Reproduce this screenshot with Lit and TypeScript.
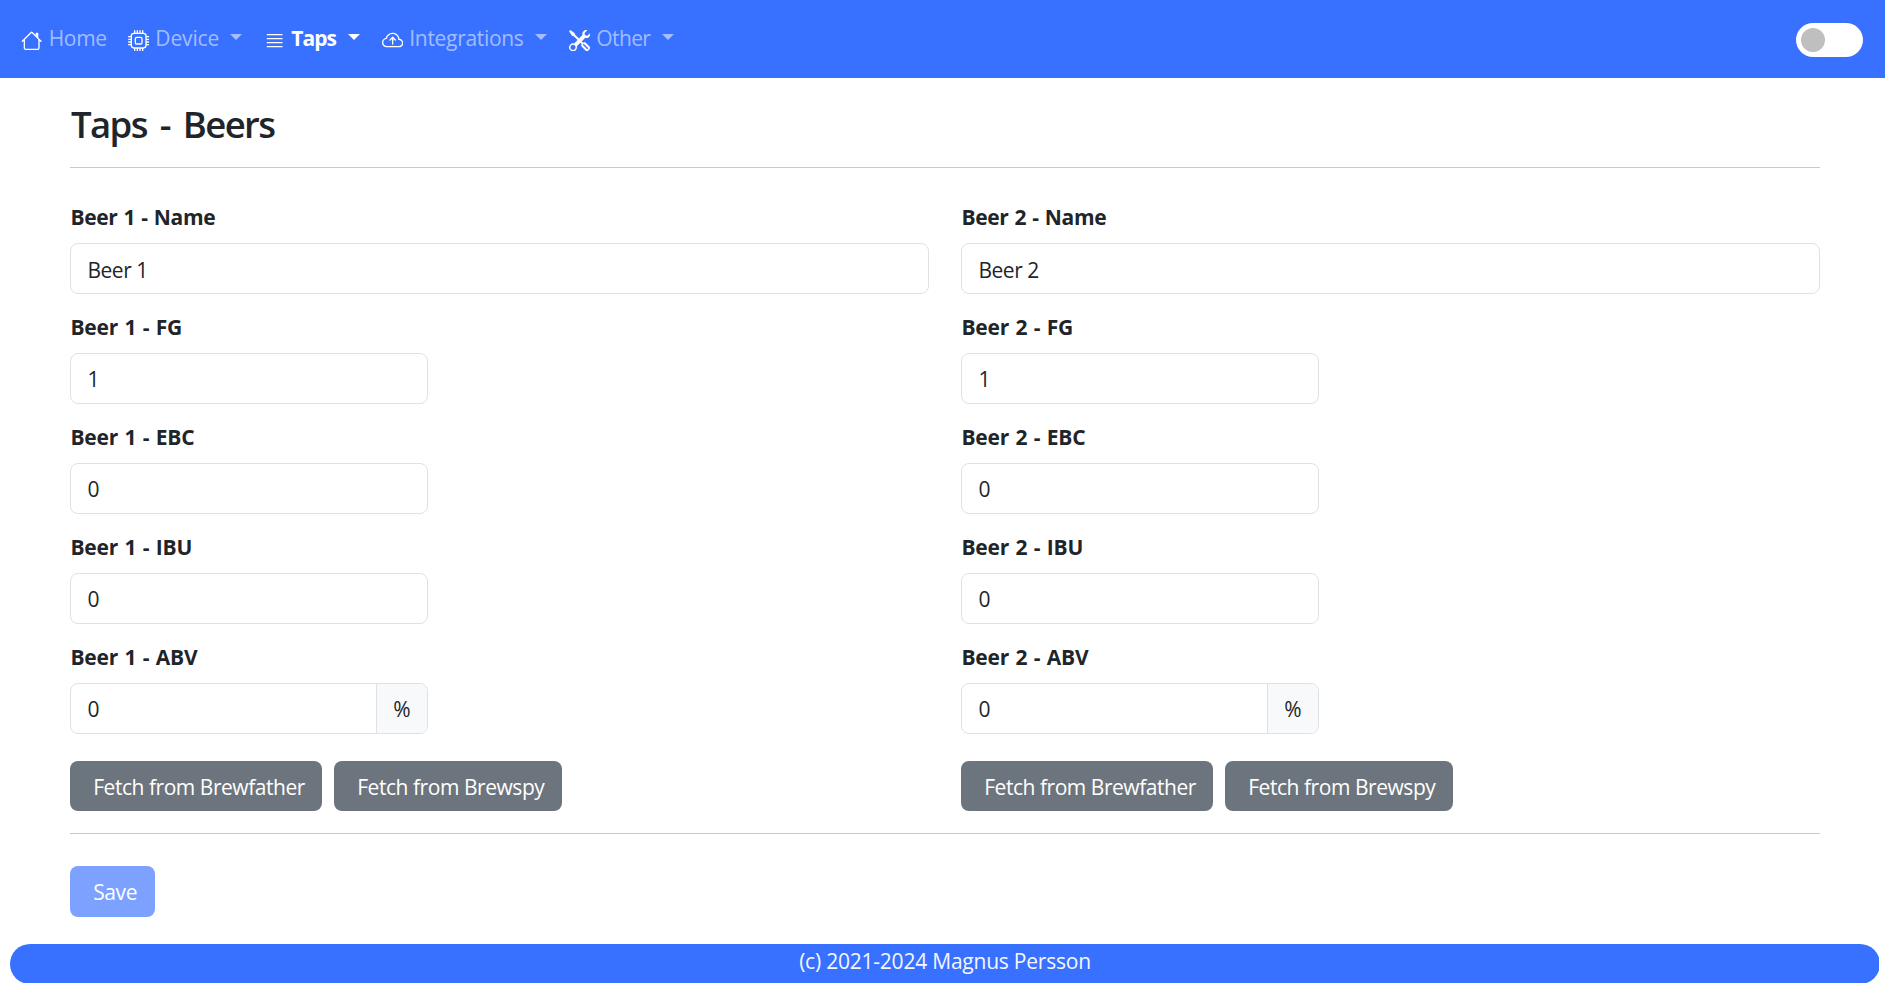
import { LitElement, html, css, svg } from "lit";
import { customElement, property } from "lit/decorators.js";

const ICONS: Record<string, string[]> = {
  house: [
    "M8.707 1.5a1 1 0 0 0-1.414 0L.646 8.146a.5.5 0 0 0 .708.708L2 8.207V13.5A1.5 1.5 0 0 0 3.5 15h9a1.5 1.5 0 0 0 1.5-1.5V8.207l.646.647a.5.5 0 0 0 .708-.708L13 5.793V2.5a.5.5 0 0 0-.5-.5h-1a.5.5 0 0 0-.5.5v1.293zM13 7.207V13.5a.5.5 0 0 1-.5.5h-9a.5.5 0 0 1-.5-.5V7.207l5-5z",
  ],
  cpu: [
    "M5 0a.5.5 0 0 1 .5.5V2h1V.5a.5.5 0 0 1 1 0V2h1V.5a.5.5 0 0 1 1 0V2h1V.5a.5.5 0 0 1 1 0V2A2.5 2.5 0 0 1 14 4.5h1.5a.5.5 0 0 1 0 1H14v1h1.5a.5.5 0 0 1 0 1H14v1h1.5a.5.5 0 0 1 0 1H14v1h1.5a.5.5 0 0 1 0 1H14a2.5 2.5 0 0 1-2.5 2.5v1.5a.5.5 0 0 1-1 0V14h-1v1.5a.5.5 0 0 1-1 0V14h-1v1.5a.5.5 0 0 1-1 0V14h-1v1.5a.5.5 0 0 1-1 0V14A2.5 2.5 0 0 1 2 11.5H.5a.5.5 0 0 1 0-1H2v-1H.5a.5.5 0 0 1 0-1H2v-1H.5a.5.5 0 0 1 0-1H2v-1H.5a.5.5 0 0 1 0-1H2A2.5 2.5 0 0 1 4.5 2V.5A.5.5 0 0 1 5 0m-.5 3A1.5 1.5 0 0 0 3 4.5v7A1.5 1.5 0 0 0 4.5 13h7a1.5 1.5 0 0 0 1.5-1.5v-7A1.5 1.5 0 0 0 11.5 3zM5 6.5A1.5 1.5 0 0 1 6.5 5h3A1.5 1.5 0 0 1 11 6.5v3A1.5 1.5 0 0 1 9.5 11h-3A1.5 1.5 0 0 1 5 9.5zM6.5 6a.5.5 0 0 0-.5.5v3a.5.5 0 0 0 .5.5h3a.5.5 0 0 0 .5-.5v-3a.5.5 0 0 0-.5-.5z",
  ],
  list: [
    "M2 12.5a.5.5 0 0 1 .5-.5h11a.5.5 0 0 1 0 1h-11a.5.5 0 0 1-.5-.5m0-3a.5.5 0 0 1 .5-.5h11a.5.5 0 0 1 0 1h-11a.5.5 0 0 1-.5-.5m0-3a.5.5 0 0 1 .5-.5h11a.5.5 0 0 1 0 1h-11a.5.5 0 0 1-.5-.5m0-3a.5.5 0 0 1 .5-.5h11a.5.5 0 0 1 0 1h-11a.5.5 0 0 1-.5-.5",
  ],
  cloud: [
    "M7.646 5.146a.5.5 0 0 1 .708 0l2 2a.5.5 0 0 1-.708.708L8.5 6.707V10.5a.5.5 0 0 1-1 0V6.707L6.354 7.854a.5.5 0 1 1-.708-.708z",
    "M4.406 3.342A5.53 5.53 0 0 1 8 2c2.69 0 4.923 2 5.166 4.579C14.758 6.804 16 8.137 16 9.773 16 11.569 14.502 13 12.687 13H3.781C1.708 13 0 11.366 0 9.318c0-1.763 1.266-3.223 2.942-3.593.143-.863.698-1.723 1.464-2.383m.653.757c-.757.653-1.153 1.44-1.153 2.056v.448l-.445.049C2.064 6.805 1 7.952 1 9.318 1 10.785 2.23 12 3.781 12h8.906C13.98 12 15 10.988 15 9.773c0-1.216-1.02-2.228-2.313-2.228h-.5v-.5C12.188 4.825 10.328 3 8 3a4.53 4.53 0 0 0-2.941 1.1z",
  ],
  tools: [
    "M1 0 0 1l2.2 3.081a1 1 0 0 0 .815.419h.07a1 1 0 0 1 .708.293l2.675 2.675-2.617 2.654A3.003 3.003 0 0 0 0 13a3 3 0 1 0 5.878-.851l2.654-2.617.968.968-.305.914a1 1 0 0 0 .242 1.023l3.27 3.27a.997.997 0 0 0 1.414 0l1.586-1.586a.997.997 0 0 0 0-1.414l-3.27-3.27a1 1 0 0 0-1.023-.242L10.5 9.5l-.96-.96 2.68-2.643A3.005 3.005 0 0 0 16 3q0-.405-.102-.777l-2.14 2.141L12 4l-.364-1.757L13.777.102a3 3 0 0 0-3.675 3.68L7.462 6.46 4.793 3.793a1 1 0 0 1-.293-.707v-.071a1 1 0 0 0-.419-.814zm9.646 10.646a.5.5 0 0 1 .708 0l2.914 2.915a.5.5 0 0 1-.707.707l-2.915-2.914a.5.5 0 0 1 0-.708M3 11l.471.242.529.026.287.445.445.287.026.529L5 13l-.242.471-.026.529-.445.287-.287.445-.529.026L3 15l-.471-.242L2 14.732l-.287-.445L1.268 14l-.026-.529L1 13l.242-.471.026-.529.445-.287.287-.445.529-.026z",
  ],
};

const NAV = [
  { id: "home", icon: "house", text: "Home", menu: false, active: false },
  { id: "device", icon: "cpu", text: "Device", menu: true, active: false },
  { id: "taps", icon: "list", text: "Taps", menu: true, active: true },
  { id: "integrations", icon: "cloud", text: "Integrations", menu: true, active: false },
  { id: "other", icon: "tools", text: "Other", menu: true, active: false },
];

@customElement("nav-bar")
class NavBar extends LitElement {
  static styles = css`
    :host { display: block; }
    .bar { display: flex; justify-content: space-between; height: 78px; padding: 0 22px 0 21.3px; background: #3870ff; box-sizing: border-box; }
    .items { display: flex; }
    .item { display: flex; align-items: flex-start; box-sizing: border-box; padding: 22px 22.3px 0 0; color: rgba(255, 255, 255, 0.55); }
    .home { width: 106.7px; letter-spacing: -0.3px; }
    .device { width: 136px; letter-spacing: -0.15px; }
    .taps { width: 118px; letter-spacing: -1px; }
    .integrations { width: 187px; letter-spacing: -0.32px; }
    .other { width: 127px; letter-spacing: -0.62px; }
    .icon { width: 21.33px; height: 21.33px; margin: 8px 6px 0 0; fill: #fff; flex: none; }
    .label { line-height: 32px; white-space: nowrap; }
    .active { color: #fff; font-weight: 700; }
    .caret { margin: 12px 0 0 auto; border: 6px solid transparent; border-top-color: currentColor; border-bottom: 0; }
    .toggle { display: flex; align-items: center; box-sizing: border-box; width: 67px; height: 34px; margin-top: 23px; padding-left: 5px; border-radius: 17px; background: #fff; }
    .knob { width: 24px; height: 24px; border-radius: 50%; background: #bfbfbf; }
  `;
  render() {
    return html`
      <nav class="bar">
        <div class="items">
          ${NAV.map((n) => html`
            <a class="item ${n.id} ${n.active ? "active" : ""}">
              <svg class="icon" viewBox="0 0 16 16">${ICONS[n.icon].map((d) => svg`<path fill-rule="evenodd" d=${d}></path>`)}</svg>
              <span class="label">${n.text}</span>
              ${n.menu ? html`<span class="caret"></span>` : ""}
            </a>`)}
        </div>
        <div class="toggle"><div class="knob"></div></div>
      </nav>`;
  }
}

@customElement("beer-form")
class BeerForm extends LitElement {
  @property({ type: Number }) index = 1;
  static styles = css`
    :host { display: block; }
    .field { height: 110px; }
    .label { display: block; height: 43px; padding: 1px 0 0 0.4px; box-sizing: border-box; line-height: 32px; font-weight: 700; letter-spacing: -0.15px; word-spacing: 1px; white-space: pre; }
    .name { letter-spacing: -0.35px; }
    .group { display: flex; box-sizing: border-box; width: 358px; height: 51px; border: 1px solid #dee2e6; border-radius: 8px; overflow: hidden; line-height: 51px; }
    .wide { width: 100%; }
    .value { flex: 1; padding-left: 16.5px; letter-spacing: -0.5px; }
    .wide .value { padding-top: 1px; }
    .unit { width: 51px; box-sizing: border-box; border-left: 1px solid #dee2e6; background: #f8f9fa; text-align: center; }
    .buttons { display: flex; gap: 12px; margin-top: 11px; }
    .button { box-sizing: border-box; height: 50px; border-radius: 8px; background: #6c757d; color: #fff; line-height: 52px; white-space: nowrap; padding-left: 23.2px; }
    .father { width: 252px; letter-spacing: -0.46px; }
    .spy { width: 228px; letter-spacing: -0.45px; }
  `;
  render() {
    const fields = [
      { key: "Name", value: `Beer ${this.index}` },
      { key: "FG", value: "1" },
      { key: "EBC", value: "0" },
      { key: "IBU", value: "0" },
      { key: "ABV", value: "0", unit: "%" },
    ];
    return html`
      ${fields.map((f) => html`
        <div class="field">
          <label class="label ${f.key === "Name" ? "name" : ""}">Beer ${this.index} - ${f.key}</label>
          <div class="group ${f.key === "Name" ? "wide" : ""}">
            <span class="value">${f.value}</span>
            ${f.unit ? html`<span class="unit">${f.unit}</span>` : ""}
          </div>
        </div>`)}
      <div class="buttons">
        <div class="button father">Fetch from Brewfather</div>
        <div class="button spy">Fetch from Brewspy</div>
      </div>`;
  }
}

@customElement("app-root")
class AppRoot extends LitElement {
  static styles = css`
    :host { display: block; height: 985px; overflow: hidden; background: #fff; color: #212529; font: 400 21px/32px "Open Sans", "Noto Sans", sans-serif; }
    .content { padding: 0 65px 0 70px; height: 866px; box-sizing: border-box; }
    .title { margin: 0; padding: 24px 0 0 1px; height: 89px; box-sizing: border-box; font-size: 36.5px; line-height: 45px; font-weight: 600; letter-spacing: -1.6px; word-spacing: 5px; }
    .rule { height: 1px; background: #c8c9ca; }
    .columns { display: grid; grid-template-columns: 859px 859px; column-gap: 32px; padding-top: 32px; height: 665px; box-sizing: border-box; }
    .save { width: 85px; height: 51px; margin-top: 32px; padding-left: 23.2px; box-sizing: border-box; border-radius: 8px; background: #3870ff; color: #fff; opacity: 0.65; line-height: 52px; letter-spacing: -0.4px; }
    .footer { width: 1869px; height: 39px; margin-left: 10px; overflow: hidden; }
    .pill { width: 1870px; height: 40px; border-radius: 20px; background: #3870ff; color: #f4f7ff; text-align: center; letter-spacing: -0.22px; line-height: 34px; }
  `;
  render() {
    return html`
      <nav-bar></nav-bar>
      <main class="content">
        <h3 class="title">Taps - Beers</h3>
        <div class="rule"></div>
        <div class="columns">
          <beer-form .index=${1}></beer-form>
          <beer-form .index=${2}></beer-form>
        </div>
        <div class="rule"></div>
        <div class="save">Save</div>
      </main>
      <footer class="footer"><div class="pill">(c) 2021-2024 Magnus Persson</div></footer>`;
  }
}
